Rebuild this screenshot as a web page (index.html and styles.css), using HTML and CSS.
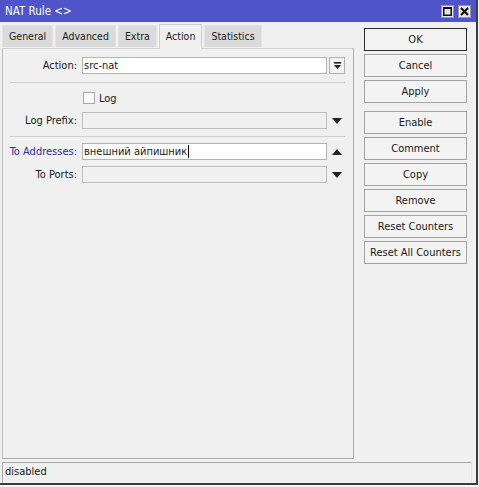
FILE: index.html
```html
<!DOCTYPE html>
<html>
<head>
<meta charset="utf-8">
<title>NAT Rule</title>
<link rel="stylesheet" href="styles.css">
</head>
<body>
<div class="window">
  <div class="titlebar">
    <span class="title">NAT Rule &lt;&gt;</span>
    <div class="tbtns">
      <span class="tbtn"><svg width="9" height="9" viewBox="0 0 9 9"><rect x="0.75" y="0.75" width="7.5" height="7.5" fill="none" stroke="#111" stroke-width="1.5"/><rect x="0" y="0" width="9" height="2" fill="#111"/></svg></span>
      <span class="tbtn"><svg width="9" height="9" viewBox="0 0 9 9"><path d="M1 1 L8 8 M8 1 L1 8" stroke="#111" stroke-width="2.2"/></svg></span>
    </div>
  </div>
  <div class="main">
    <div class="left">
      <div class="tabs">
        <span class="tab">General</span>
        <span class="tab">Advanced</span>
        <span class="tab">Extra</span>
        <span class="tab active">Action</span>
        <span class="tab">Statistics</span>
      </div>
      <div class="panel">
        <div class="row">
          <span class="label">Action:</span>
          <span class="input">src-nat</span>
          <span class="ddbtn"><svg width="9" height="9" viewBox="0 0 9 9"><rect x="1" y="1" width="7" height="1.6" fill="#222"/><path d="M1 4 L8 4 L4.5 8 Z" fill="#222"/></svg></span>
        </div>
        <div class="sep sep1"></div>
        <div class="checkrow">
          <span class="checkbox"></span>
          <span class="checklabel">Log</span>
        </div>
        <div class="row row-prefix">
          <span class="label">Log Prefix:</span>
          <span class="input disabled"></span>
          <span class="arrow"><svg width="10" height="6" viewBox="0 0 10 6"><path d="M0 0 L10 0 L5 6 Z" fill="#222"/></svg></span>
        </div>
        <div class="sep sep2"></div>
        <div class="row row-addr">
          <span class="label blue">To Addresses:</span>
          <span class="input">внешний айпишник<span class="caret"></span></span>
          <span class="arrow"><svg width="10" height="6" viewBox="0 0 10 6"><path d="M0 6 L10 6 L5 0 Z" fill="#222"/></svg></span>
        </div>
        <div class="row row-ports">
          <span class="label">To Ports:</span>
          <span class="input disabled"></span>
          <span class="arrow"><svg width="10" height="6" viewBox="0 0 10 6"><path d="M0 0 L10 0 L5 6 Z" fill="#222"/></svg></span>
        </div>
      </div>
    </div>
    <div class="buttons">
      <span class="btn default">OK</span>
      <span class="btn">Cancel</span>
      <span class="btn">Apply</span>
      <span class="btn group">Enable</span>
      <span class="btn">Comment</span>
      <span class="btn">Copy</span>
      <span class="btn">Remove</span>
      <span class="btn">Reset Counters</span>
      <span class="btn">Reset All Counters</span>
    </div>
  </div>
  <div class="status">disabled</div>
</div>
</body>
</html>
```
FILE: styles.css
```css
* { box-sizing: border-box; }
html, body { margin: 0; padding: 0; }
body {
  background: #f7f7f7;
  font-family: "DejaVu Sans Condensed", "Liberation Sans", sans-serif;
  font-size: 11px;
  color: #1a1a1a;
}
.window {
  width: 478px;
  height: 485px;
  background: #f0f0f0;
  border-right: 2px solid #3c3c3c;
  border-bottom: 2px solid #3c3c3c;
  display: flex;
  flex-direction: column;
}
.titlebar {
  height: 22px;
  background: #4f55c8;
  display: flex;
  align-items: center;
  justify-content: space-between;
  padding: 0 5px 0 5px;
}
.title {
  color: #fff;
  font-size: 11.5px;
  line-height: 22px;
}
.tbtns { display: flex; gap: 4px; }
.tbtn {
  width: 13px;
  height: 13px;
  background: #e6e6e6;
  border: 1px solid #9a9a9a;
  display: flex;
  align-items: center;
  justify-content: center;
}
.main {
  display: flex;
  flex: 0 0 auto;
}
.left {
  width: 352px;
  margin-left: 2px;
  display: flex;
  flex-direction: column;
}
.tabs {
  display: flex;
  gap: 2px;
  padding-top: 2px;
  height: 26px;
  align-items: flex-end;
  position: relative;
  z-index: 1;
}
.tab {
  height: 22px;
  line-height: 21px;
  padding: 0 6px 0 6px;
  background: #dadada;
  border: 1px solid #e4e4e4;
  border-bottom: none;
  margin-bottom: 1px;
  font-size: 10.5px;
  color: #1a1a1a;
}
.tab.active {
  height: 25px;
  line-height: 22px;
  background: #f0f0f0;
  border: 1px solid #cfcfcf;
  border-bottom: none;
  margin-bottom: -1px;
  padding: 0 6px 0 6px;
}
.panel {
  height: 411px;
  border: 1px solid #acacac;
  border-top-color: #d2d2d2;
  border-left-color: #bdbdbd;
  padding: 8px 0 0 0;
  display: flex;
  flex-direction: column;
}
.row {
  display: flex;
  align-items: center;
  height: 17px;
}
.label {
  width: 74px;
  text-align: right;
  margin-right: 5px;
  white-space: nowrap;
}
.label.blue { color: #2b2fa8; }
.input {
  width: 245px;
  height: 17px;
  background: #fff;
  border: 1px solid #b4b4b4;
  line-height: 15px;
  padding-left: 1px;
  display: flex;
  align-items: center;
  white-space: nowrap;
}
.input.disabled { background: #f0f0f0; border-color: #bebebe; }
.caret {
  display: inline-block;
  width: 1px;
  height: 13px;
  background: #000;
  margin-left: 1px;
}
.ddbtn {
  width: 16px;
  height: 17px;
  margin-left: 2px;
  border: 1px solid #b0b0b0;
  background: #f2f2f2;
  display: flex;
  align-items: center;
  justify-content: center;
}
.arrow {
  width: 16px;
  margin-left: 2px;
  display: flex;
  justify-content: center;
}
.sep {
  margin-left: 7px;
  width: 335px;
  height: 1px;
  background: #cfcfcf;
}
.sep1 { margin-top: 8px; }
.sep2 { margin-top: 7px; }
.checkrow {
  display: flex;
  align-items: center;
  height: 12px;
  margin-top: 9px;
  padding-left: 80px;
}
.checkbox {
  width: 12px;
  height: 12px;
  background: #fff;
  border: 1px solid #a8a8a8;
}
.checklabel { margin-left: 4px; }
.row-prefix { margin-top: 8px; }
.row-addr { margin-top: 6px; }
.row-ports { margin-top: 6px; }
.buttons {
  margin-left: 10px;
  margin-top: 6px;
  width: 103px;
  display: flex;
  flex-direction: column;
  gap: 3px;
}
.btn {
  height: 23px;
  border: 1px solid #a3a3a3;
  background: #f3f3f3;
  display: flex;
  align-items: center;
  justify-content: center;
  font-size: 11px;
  white-space: nowrap;
}
.btn.default { border: 1px solid #2a2a2a; box-shadow: inset 0 0 0 1px #f3f3f3; }
.btn.group { margin-top: 5px; }
.status {
  margin-top: 3px;
  margin-left: 2px;
  width: 470px;
  height: 22px;
  border-top: 1px solid #a8a8a8;
  border-left: 1px solid #a8a8a8;
  border-right: 1px solid #e2e2e2;
  padding-left: 2px;
  line-height: 18px;
  font-size: 11px;
}
```
